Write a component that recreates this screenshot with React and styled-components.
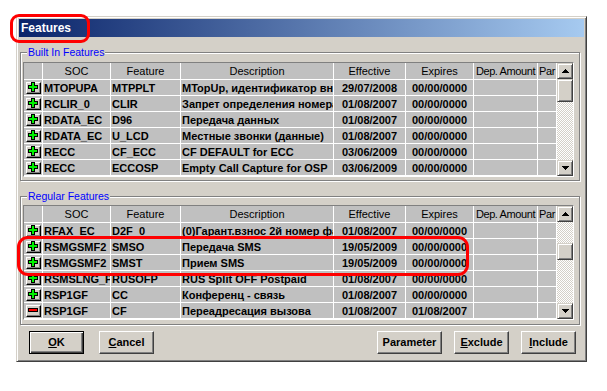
import React from "react";
import styled, { createGlobalStyle, css } from "styled-components";

const FONT = `"Liberation Sans", Arial, Helvetica, sans-serif`;

const GlobalStyle = createGlobalStyle`
  html, body { margin: 0; padding: 0; background: #ffffff; }
  body { font-family: ${FONT}; }
  *, *::before, *::after { box-sizing: border-box; }
`;

const Page = styled.div`
  position: relative;
  width: 607px;
  height: 391px;
  padding: 16px 0 0 16px;
  overflow: hidden;
`;

const Window = styled.div`
  width: 571px;
  background: #d4d0c8;
  border: 1px solid;
  border-color: #d4d0c8 #404040 #404040 #d4d0c8;
  box-shadow: inset 1px 1px 0 #ffffff, inset -1px -1px 0 #808080;
  padding: 2px;
  display: flex;
  flex-direction: column;
`;

const TitleBar = styled.div`
  height: 18px;
  display: flex;
  align-items: center;
  padding-left: 2px;
  background: linear-gradient(to right, #0a246a, #a6caf0);
  color: #ffffff;
  font: bold 12px ${FONT};
`;

const Body = styled.div`
  padding: 9px 4px 5px 1px;
  display: flex;
  flex-direction: column;
`;

const Group = styled.fieldset`
  margin: ${(p) => p.$mt}px 0 0 0;
  padding: ${(p) => p.$pt}px 5px ${(p) => p.$pb}px 2px;
  border: 1px solid #808080;
  box-shadow: inset 1px 1px 0 #ffffff, 1px 1px 0 #ffffff;
  min-width: 0;
`;

const Legend = styled.legend`
  margin-left: 4px;
  padding: 0 1px;
  font: 10.5px/13px ${FONT};
  color: #0000ff;
  background: #d4d0c8;
`;

const GridFrame = styled.div`
  display: flex;
  border: 1px solid;
  border-color: #808080 #ffffff #ffffff #808080;
`;

const Table = styled.div`
  flex: 1;
  display: flex;
  flex-direction: column;
  gap: 1px;
  background: #ffffff;
  padding: 0 1px 1px 0;
`;

const COLS = "18px 67px 69px 152px 71px 67px 63px 18px";

const Row = styled.div`
  display: grid;
  grid-template-columns: ${COLS};
  column-gap: 1px;
  height: ${(p) => p.$h}px;
`;

const Cell = styled.div`
  background: #c0c0c0;
  overflow: hidden;
  white-space: nowrap;
  display: flex;
  align-items: center;
  justify-content: ${(p) => (p.$center ? "center" : "flex-start")};
  padding-left: ${(p) => (p.$center ? 0 : 1)}px;
  font: bold 11px ${FONT};
  color: #000000;
`;

const HeadCell = styled(Cell)`
  font-weight: normal;
  justify-content: safe center;
  padding: 0;
  letter-spacing: ${(p) => (p.$tight ? "-0.4px" : "0")};
`;

const IconCell = styled(Cell)`
  padding-left: 2px;
  align-items: center;
`;

const RowButton = styled.div`
  width: 15px;
  height: 12px;
  background: #d4d0c8;
  border: 1px solid;
  border-color: #ffffff #000000 #000000 #ffffff;
  box-shadow: inset -1px -1px 0 #808080;
  display: flex;
  align-items: center;
  justify-content: center;
  padding: 0 1px 1px 0;
`;

const ScrollBar = styled.div`
  width: 16px;
  display: flex;
  flex-direction: column;
  background-color: #ffffff;
  background-image: repeating-conic-gradient(#d4d0c8 0 25%, #ffffff 0 50%);
  background-size: 2px 2px;
`;

const raised = css`
  background: #d4d0c8;
  border: 1px solid;
  border-color: #d4d0c8 #404040 #404040 #d4d0c8;
  box-shadow: inset 1px 1px 0 #ffffff, inset -1px -1px 0 #808080;
`;

const ArrowButton = styled.div`
  ${raised};
  width: 16px;
  height: 16px;
  flex: none;
  display: flex;
  align-items: center;
  justify-content: center;
  padding-bottom: 1px;
`;

const Thumb = styled.div`
  ${raised};
  width: 16px;
  flex: none;
  height: ${(p) => p.$h}px;
  margin-top: ${(p) => p.$offset}px;
`;

const Track = styled.div`
  flex: 1;
`;

const Footer = styled.div`
  display: flex;
  justify-content: space-between;
  margin-top: 6px;
  padding: 0 4px 0 9px;
`;

const ButtonGroup = styled.div`
  display: flex;
  gap: ${(p) => p.$gap}px;
`;

const Button = styled.button`
  width: ${(p) => p.$w}px;
  height: 23px;
  padding: 0 0 2px;
  margin: 0;
  background: #d4d0c8;
  font: bold 11px ${FONT};
  color: #000000;
  border: 1px solid;
  border-color: #ffffff #404040 #404040 #ffffff;
  box-shadow: inset -1px -1px 0 #808080;
  ${(p) =>
    p.$default &&
    css`
      border-color: #000000;
      box-shadow: inset 1px 1px 0 #ffffff, inset -1px -1px 0 #404040,
        inset -2px -2px 0 #808080;
    `}
`;

const Annotation = styled.div`
  position: absolute;
  border: 3px solid #ff0000;
  border-radius: ${(p) => p.$r}px;
  pointer-events: none;
`;

const PlusIcon = () => (
  <svg width="10" height="10" viewBox="0 0 10 10" shapeRendering="crispEdges">
    <path
      d="M3.5 0.5h3v3h3v3h-3v3h-3v-3h-3v-3h3z"
      fill="#00f000"
      stroke="#000000"
      strokeWidth="1"
    />
  </svg>
);

const MinusIcon = () => (
  <svg width="10" height="10" viewBox="0 0 10 10" shapeRendering="crispEdges">
    <path d="M0.5 3.5h9v3h-9z" fill="#ff0000" stroke="#000000" strokeWidth="1" />
  </svg>
);

const UpArrow = () => (
  <svg width="7" height="4" viewBox="0 0 7 4" shapeRendering="crispEdges">
    <path d="M3 0h1v1h1v1h1v1h1v1H0v-1h1v-1h1v-1h1z" fill="#000" />
  </svg>
);

const DownArrow = () => (
  <svg width="7" height="4" viewBox="0 0 7 4" shapeRendering="crispEdges">
    <path d="M0 0h7v1h-1v1h-1v1h-1v1h-1v-1h-1v-1h-1v-1h-1z" fill="#000" />
  </svg>
);

const HEADERS = ["", "SOC", "Feature", "Description", "Effective", "Expires", "Dep. Amount", "Par"];

const builtIn = [
  ["plus", "MTOPUPA", "MTPPLT", "MTopUp, идентификатор внешнего", "29/07/2008", "00/00/0000"],
  ["plus", "RCLIR_0", "CLIR", "Запрет определения номера", "01/08/2007", "00/00/0000"],
  ["plus", "RDATA_EC", "D96", "Передача данных", "01/08/2007", "00/00/0000"],
  ["plus", "RDATA_EC", "U_LCD", "Местные звонки (данные)", "01/08/2007", "00/00/0000"],
  ["plus", "RECC", "CF_ECC", "CF DEFAULT for ECC", "03/06/2009", "00/00/0000"],
  ["plus", "RECC", "ECCOSP", "Empty Call Capture for OSP", "03/06/2009", "00/00/0000"],
];

const regular = [
  ["plus", "RFAX_EC", "D2F_0", "(0)Гарант.взнос 2й номер факса", "01/08/2007", "00/00/0000"],
  ["plus", "RSMGSMF2", "SMSO", "Передача SMS", "19/05/2009", "00/00/0000"],
  ["plus", "RSMGSMF2", "SMST", "Прием SMS", "19/05/2009", "00/00/0000"],
  ["plus", "RSMSLNG_PP", "RUSOFP", "RUS Split OFF Postpaid", "01/08/2007", "00/00/0000"],
  ["plus", "RSP1GF", "CC", "Конференц - связь", "01/08/2007", "00/00/0000"],
  ["minus", "RSP1GF", "CF", "Переадресация вызова", "01/08/2007", "01/08/2007"],
];

function FeatureGrid({ rows, thumbOffset, thumbHeight }) {
  return (
    <GridFrame>
      <Table>
        <Row $h={16}>
          {HEADERS.map((h, i) => (
            <HeadCell key={i} $tight={i >= 6}>
              {h}
            </HeadCell>
          ))}
        </Row>
        {rows.map((r, i) => (
          <Row $h={15} key={i}>
            <IconCell>
              <RowButton>{r[0] === "plus" ? <PlusIcon /> : <MinusIcon />}</RowButton>
            </IconCell>
            <Cell>{r[1]}</Cell>
            <Cell>{r[2]}</Cell>
            <Cell>{r[3]}</Cell>
            <Cell $center>{r[4]}</Cell>
            <Cell $center>{r[5]}</Cell>
            <Cell />
            <Cell />
          </Row>
        ))}
      </Table>
      <ScrollBar>
        <ArrowButton>
          <UpArrow />
        </ArrowButton>
        <Thumb $offset={thumbOffset} $h={thumbHeight} />
        <Track />
        <ArrowButton>
          <DownArrow />
        </ArrowButton>
      </ScrollBar>
    </GridFrame>
  );
}

export default function App() {
  return (
    <>
      <GlobalStyle />
      <Page>
        <Window>
          <TitleBar>Features</TitleBar>
          <Body>
            <Group $mt={0} $pt={3} $pb={3}>
              <Legend>Built In Features</Legend>
              <FeatureGrid rows={builtIn} thumbOffset={0} thumbHeight={23} />
            </Group>
            <Group $mt={9} $pt={2} $pb={4}>
              <Legend>Regular Features</Legend>
              <FeatureGrid rows={regular} thumbOffset={21} thumbHeight={17} />
            </Group>
            <Footer>
              <ButtonGroup $gap={15}>
                <Button $w={55} $default>
                  <u>O</u>K
                </Button>
                <Button $w={55}>
                  <u>C</u>ancel
                </Button>
              </ButtonGroup>
              <ButtonGroup $gap={12}>
                <Button $w={65}>Parameter</Button>
                <Button $w={55}>
                  <u>E</u>xclude
                </Button>
                <Button $w={55}>
                  <u>I</u>nclude
                </Button>
              </ButtonGroup>
            </Footer>
          </Body>
        </Window>
        <Annotation $r={9} style={{ left: 10, top: 14, width: 80, height: 29 }} />
        <Annotation $r={11} style={{ left: 17, top: 236, width: 452, height: 40 }} />
      </Page>
    </>
  );
}
